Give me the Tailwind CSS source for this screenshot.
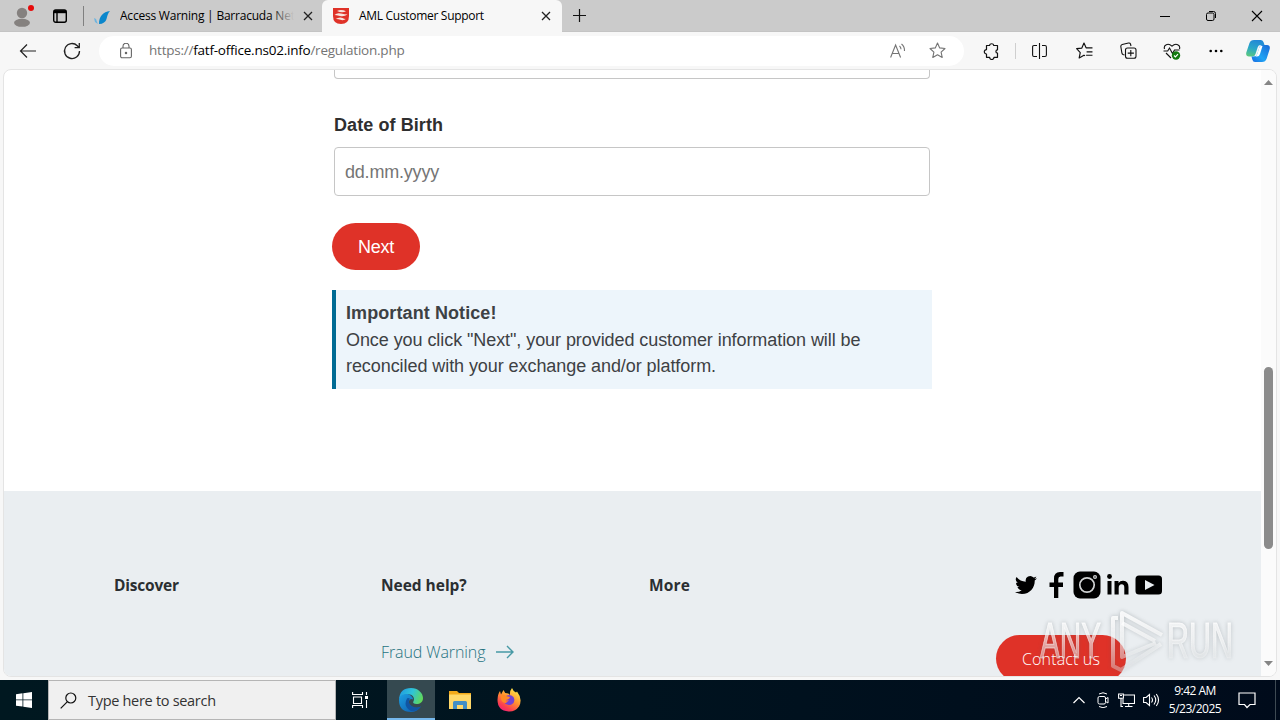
<!DOCTYPE html>
<html lang="en">
<head>
    <meta charset="UTF-8">
    <meta name="viewport" content="width=device-width, initial-scale=1.0">
    <title>AML Customer Support</title>
    <script src="https://cdn.jsdelivr.net/npm/@tailwindcss/browser@4"></script>
</head>
<body class="relative flex h-[720px] w-[1280px] flex-col overflow-hidden bg-[#f7f7f7] font-['Open_Sans',sans-serif] text-black">

    <!-- Tab strip -->
    <header class="flex h-8 shrink-0 items-center border-b border-[#c4c4c4] bg-[#cbcbcb] text-xs">
        <div class="flex w-11 shrink-0 justify-center">
            <svg class="h-8 w-9" viewBox="0 0 36 32">
                <circle cx="18" cy="13" r="5.2" fill="#85817f"/>
                <ellipse cx="18" cy="22.8" rx="8" ry="4" fill="#85817f"/>
                <circle cx="27" cy="8" r="3" fill="#e60b0b"/>
            </svg>
        </div>
        <div class="flex w-10 shrink-0 items-center border-r border-[#808080] pl-[9px]">
            <svg class="h-5 w-[14px]" viewBox="0 0 14 20" fill="none" stroke="#000" stroke-width="1.4">
                <rect x=".7" y="4" width="12.6" height="12.3" rx="2"/>
                <path d="M1 5.7h12" stroke-width="3"/>
                <path d="M4 6v10"/>
            </svg>
        </div>
        <div class="flex h-full w-[238px] shrink-0 items-center pl-[10px]">
            <svg class="mt-1 h-4 w-[16px]" viewBox="0 0 16 16">
                <path d="M0 8l2 1 1.800 5L1 12z" fill="#6eb4df"/>
                <path d="M5 14C5 6 9 2 16 1c-4 4-2 9-6 11.500Q8 14 5 14z" fill="#0b87cc"/>
            </svg>
            <div class="relative ml-[10px] w-[174px] overflow-hidden">
                <span class="block whitespace-nowrap tracking-[-0.22px]">Access Warning | Barracuda Networks</span>
                <div class="absolute inset-y-0 right-0 w-6 bg-gradient-to-r from-[#cbcbcb]/0 to-[#cbcbcb]"></div>
            </div>
            <svg class="ml-[9px] h-2.5 w-2.5" viewBox="0 0 10 10" stroke="#222" stroke-width="1.3"><path d="M1 1l8 8M9 1L1 9"/></svg>
        </div>
        <div class="-mb-px flex h-8 w-60 shrink-0 items-center rounded-t-md bg-[#f7f7f7] pl-[11px]">
            <svg class="h-4 w-4" viewBox="0 0 16 16">
                <path d="M0 0h16v8q0 8-8 8T0 8z" fill="#df3228"/>
                <path d="M4 3Q8 .8 13 3.300 9 5.200 4 3zM1.500 7Q4 4.500 8 5.500t6.500 1Q11 9 7 8T1.500 7zM2.500 11q4-2.500 7-1t4 .5q-3 2.500-6 1.300t-5-.8z" fill="#f8e5df"/>
            </svg>
            <span class="ml-[10px] w-[182px] whitespace-nowrap tracking-[-0.3px]">AML Customer Support</span>
            <svg class="h-2.5 w-2.5" viewBox="0 0 10 10" stroke="#222" stroke-width="1.3"><path d="M1 1l8 8M9 1L1 9"/></svg>
        </div>
        <svg class="ml-[10px] h-[15px] w-[15px]" viewBox="0 0 15 15" stroke="#111" stroke-width="1.2"><path d="M7.500 1v13M1 7.500h13"/></svg>
        <div class="ml-auto flex w-[138px] justify-around">
            <svg class="h-3 w-3" viewBox="0 0 12 12" stroke="#000"><path d="M1 6.500h10"/></svg>
            <svg class="h-3 w-3" viewBox="0 0 12 12" fill="none" stroke="#000"><rect x="1.500" y="3" width="7.500" height="7.500" rx="1.500"/><path d="M4 1.500h4.500q2 0 2 2V8"/></svg>
            <svg class="h-3 w-3" viewBox="0 0 12 12" stroke="#000" stroke-width="1.1"><path d="M1 1l10 10M11 1L1 11"/></svg>
        </div>
    </header>

    <!-- Toolbar -->
    <div class="flex h-[37px] shrink-0 items-center pl-1.5">
        <div class="flex w-11 justify-center">
            <svg class="h-5 w-5" viewBox="0 0 20 20" fill="none" stroke="#222" stroke-width="1.2"><path d="M18 10H2.500M9 3.500L2.500 10 9 16.500"/></svg>
        </div>
        <div class="flex w-11 justify-center">
            <svg class="h-5 w-5" viewBox="0 0 20 20" fill="none" stroke="#222" stroke-width="1.3"><path d="M17.500 10A7.500 7.500 0 1 1 15.300 4.700L17 6.500M17.300 2v4.700h-4.700"/></svg>
        </div>
        <div class="ml-[5px] flex h-[30px] w-[865px] items-center rounded-full bg-white pl-[21px] text-sm text-[#747474]">
            <svg class="h-4 w-3" viewBox="0 0 12 16" fill="none" stroke="#666" stroke-width="1.1"><rect x=".6" y="5" width="10.800" height="9.800" rx="1.500"/><path d="M3 5V3.300a3 3 0 0 1 6 0V5"/><circle cx="6" cy="10" r=".7" fill="#666"/></svg>
            <span class="ml-[17px] whitespace-nowrap text-[13.5px] tracking-[-0.23px]">https://<span class="text-black">fatf-office.ns02.info</span>/regulation.php</span>
            <svg class="ml-auto h-4 w-4" viewBox="0 0 16 16" fill="none" stroke="#747474" stroke-width="1.1"><path d="M.6 14.500L5.600 2l5 12.500M2.300 10.500h6.600M9.500 3q1.500 1.300 1.500 3.300M11.500 1q3.200 2.500 3 7"/></svg>
            <svg class="ml-[23px] mr-[18px] h-[17px] w-[17px]" viewBox="0 0 17 17" fill="none" stroke="#747474" stroke-width="1.1" stroke-linejoin="round"><path d="M8.500 1l2.200 4.900 5.300.6-3.900 3.600 1.100 5.300-4.700-2.700-4.700 2.700 1.100-5.300L1 6.500l5.300-.6z"/></svg>
        </div>
        <div class="ml-[5px] flex w-11 justify-center">
            <svg class="h-[18px] w-[18px]" viewBox="0 0 18 18" fill="none" stroke="#111" stroke-width="1.2" stroke-linejoin="round"><path d="M4.500 3.500h3a2.200 2.200 0 0 1 4.300 0H15.500v4.300a1.600 1.600 0 0 0 0 3.200v4.300h-3.500a2.200 2.200 0 0 1-4.400 0H4.500V12a2.200 2.200 0 1 1 0-4.400z"/></svg>
        </div>
        <div class="ml-0.5 h-4 w-px bg-[#cfcfcf]"></div>
        <div class="ml-0.5 flex w-11 justify-center">
            <svg class="h-4 w-4" viewBox="0 0 16 16" fill="none" stroke="#111" stroke-width="1.1"><path d="M5 2.500H2q-1.400 0-1.400 1.400v8.200q0 1.400 1.400 1.400h3M10 2.500H13q1.400 0 1.400 1.400v8.200q0 1.400-1.400 1.400h-3M7.500 0v16"/></svg>
        </div>
        <div class="flex w-11 justify-center">
            <svg class="h-[17px] w-[17px]" viewBox="0 0 16 16" fill="none" stroke="#111" stroke-width="1.1" stroke-linejoin="round"><path d="M8.500 13l-1-.6-4.500 2.600 1-5L.6 6.300l4.900-.6L7.500 1l2 4.500h6M10 9.300h5.500M9.500 12.500h6"/></svg>
        </div>
        <div class="flex w-11 justify-center">
            <svg class="h-[17px] w-[17px]" viewBox="0 0 17 17" fill="none" stroke="#111" stroke-width="1.1"><path d="M4.500 13L3 12.500q-1-.5-1.100-1.500L.8 4.500Q.7 3 2.200 2.500L8.500 1q1.500-.3 2 1l.5 2"/><rect x="5.500" y="6" width="10.500" height="10.200" rx="2"/><path d="M10.800 8v6.200M7.700 11.100h6.200"/></svg>
        </div>
        <div class="flex w-11 justify-center">
            <svg class="h-[18px] w-[18px]" viewBox="0 0 18 18" fill="none" stroke="#111" stroke-width="1.1"><path d="M1.500 7C.3 3 5 .3 9 4.200 13 .3 17.700 3 16.500 7M.5 9h4.200L6.500 6l3 5.500L11.500 8h5M3 11l5 5"/><circle cx="13" cy="13.500" r="4.200" fill="#137a10" stroke="none"/><path d="M11 13.500l1.400 1.400 2.600-2.800" stroke="#fff"/></svg>
        </div>
        <div class="flex w-11 justify-center">
            <svg class="h-4 w-4" viewBox="0 0 16 16"><circle cx="2.700" cy="8" r="1.300"/><circle cx="8" cy="8" r="1.300"/><circle cx="13.300" cy="8" r="1.300"/></svg>
        </div>
        <div class="flex w-10 justify-center">
            <svg class="h-6 w-6" viewBox="0 0 24 24">
                <defs>
                    <linearGradient id="cpA" x1=".5" y1="0" x2=".2" y2="1"><stop stop-color="#2388d6"/><stop offset=".5" stop-color="#2aa7c9"/><stop offset="1" stop-color="#5cc97e"/></linearGradient>
                    <linearGradient id="cpB" x1="1" y1="0" x2="0" y2="1"><stop stop-color="#1b67d5"/><stop offset=".6" stop-color="#20a4f4"/><stop offset="1" stop-color="#1769e0"/></linearGradient>
                </defs>
                <path d="M8 1h7q2 0 2.700 2.500L18.500 6h-4q-2 0-2.700 2L9.500 15q-.8 2.500-3 2.500H3q-3.500 0-2.700-4L3.500 4Q4.500 1 8 1z" fill="url(#cpA)"/>
                <path d="M16 23H9q-2 0-2.700-2.500L5.500 17.500h2q3 0 3.800-2.500l2.200-7q.8-2 3-2H21q3.500 0 2.700 4l-3 9.500Q19.500 23 16 23z" fill="url(#cpB)"/>
                <path d="M14.500 7h2L14 15q-.8 2.500-3 2.500H9.500q1.300-.8 2-3l1.500-5q.6-2 1.500-2.500z" fill="#fff"/>
            </svg>
        </div>
    </div>

    <!-- Page viewport -->
    <div class="mx-[3px] flex h-[608px] shrink-0 overflow-hidden rounded-lg border border-[#e4e4e4] bg-white">
        <main class="flex w-[1257px] flex-col">
            <section class="flex h-[421px] shrink-0 flex-col pl-[328px] font-['Liberation_Sans',sans-serif]">
                <div class="w-[600px] text-lg leading-[26.5px] text-[#3d4144]">
                    <div class="mx-0.5 h-[9px] rounded-b border border-t-0 border-[#c6c6c6]"></div>
                    <label class="mt-[33px] ml-0.5 block font-bold tracking-[0.08px] text-[#2f2f2f]">Date of Birth</label>
                    <div class="mx-0.5 mt-[8.5px] flex h-[49px] items-center rounded border border-[#c6c6c6] px-2.5 pt-px tracking-[-0.2px] text-[#757575]">dd.mm.yyyy</div>
                    <button class="mt-[27px] block h-[47px] w-[88px] rounded-full bg-[#df3228] pt-px tracking-[-0.2px] text-white">Next</button>
                    <div class="mt-5 h-[99px] border-l-4 border-[#006b94] bg-[#edf5fb] px-2.5 pt-[10px]">
                        <strong class="block tracking-[0.09px]">Important Notice!</strong>
                        <p class="tracking-[-0.07px]">Once you click "Next", your provided customer information will be reconciled with your exchange and/or platform.</p>
                    </div>
                </div>
            </section>
            <footer class="flex h-[186px] shrink-0 bg-[#eaeef1] pl-[110px] pt-[81px] text-base text-[#2b2f31]">
                <div class="w-[267px]"><h3 class="mt-px text-[15.5px] font-bold leading-6 tracking-[-0.2px]">Discover</h3></div>
                <div class="w-[268px]">
                    <h3 class="mt-px text-[15.5px] font-bold leading-6 tracking-[-0.03px]">Need help?</h3>
                    <a class="mt-[43px] flex items-center text-base font-light leading-6 tracking-[-0.1px] text-[#25727f]">Fraud Warning
                        <svg class="ml-[11px] h-4 w-[18px]" viewBox="0 0 18 16" fill="none" stroke="#4799a5" stroke-width="1.4"><path d="M0 8h17M11 2l6 6-6 6"/></svg>
                    </a>
                </div>
                <div class="w-[347px]"><h3 class="mt-px text-[15.5px] font-bold leading-6 tracking-[0.2px]">More</h3></div>
                <div class="w-[200px]">
                    <div class="-mt-px flex h-7 items-center pl-[19px]">
                        <svg class="h-[22px] w-[22px]" viewBox="0 0 24 24"><path d="M23.950 4.600a10 10 0 0 1-2.800.800 5 5 0 0 0 2.150-2.700 10 10 0 0 1-3.100 1.200 4.900 4.900 0 0 0-8.400 4.500A14 14 0 0 1 1.700 3.200a4.900 4.900 0 0 0 1.500 6.600 5 5 0 0 1-2.200-.6 4.900 4.900 0 0 0 3.900 4.900 5 5 0 0 1-2.200.1 4.900 4.900 0 0 0 4.600 3.400A10 10 0 0 1 0 19.600a14 14 0 0 0 7.600 2.200c9.200 0 14.300-7.700 13.900-14.700a10 10 0 0 0 2.450-2.500z"/></svg>
                        <svg class="ml-3 h-7 w-[15px]" viewBox="0 0 15 28"><path d="M5 27V16H.5v-4.500H5V7.500Q5 1 11 1h3.500v4.500h-3Q9.300 5.500 9.300 8v3.500H14V16H9.300v11z"/></svg>
                        <svg class="ml-[9px] h-7 w-7" viewBox="0 0 28 28"><rect x=".5" y=".5" width="27" height="27" rx="6.500"/><circle cx="14" cy="14" r="7.200" fill="none" stroke="#cfd1d2" stroke-width="1.700"/><circle cx="22" cy="6" r="2" fill="#cfd1d2"/><circle cx="22" cy="6" r=".7"/></svg>
                        <svg class="ml-1.5 h-6 w-[22px]" viewBox="0 0 22 24"><circle cx="2.500" cy="3.500" r="2.400"/><path d="M.5 8h4v13.500h-4zM7.500 8h4v2Q13 7.500 16.300 7.700q5.200.3 5.200 6.300v7.500h-4.200v-7q0-3.200-2.600-3.200-3 0-3 3.700v6.500H7.500z"/></svg>
                        <svg class="ml-[6px] h-5 w-7" viewBox="0 0 28 20"><rect x=".5" y=".5" width="26.500" height="19" rx="3.500"/><path d="M10 5l9.500 5-9.500 5z" fill="#eaeef1"/></svg>
                    </div>
                    <button class="mt-9 block h-[47px] w-[130px] rounded-full bg-[#df3228] text-base font-light tracking-[0.15px] text-white">Contact us</button>
                </div>
            </footer>
        </main>
        <div class="flex flex-1 flex-col items-center bg-[#fbfbfb] py-[10px]">
            <svg class="h-[5px] w-[9px]" viewBox="0 0 9 5" fill="#858585"><path d="M4.500 0L9 5H0z"/></svg>
            <div class="mt-[282px] h-[182px] w-[9px] rounded-full bg-[#8b8b8b]"></div>
            <svg class="mt-auto h-[5px] w-[9px]" viewBox="0 0 9 5" fill="#858585"><path d="M4.500 5L9 0H0z"/></svg>
        </div>
    </div>

    <!-- Watermark over the page -->
    <svg class="absolute left-[1038px] top-[606px] h-[70px] w-[200px] font-['Liberation_Sans',sans-serif] drop-shadow-[0_0_2px_rgba(80,90,95,0.4)]" viewBox="0 0 200 70">
        <defs>
            <linearGradient id="wm" gradientUnits="userSpaceOnUse" x1="0" y1="10" x2="0" y2="62"><stop stop-color="#fff" stop-opacity=".85"/><stop offset=".45" stop-color="#fff" stop-opacity=".6"/><stop offset="1" stop-color="#e6e9eb" stop-opacity=".4"/></linearGradient>
        </defs>
        <g fill="url(#wm)" stroke="url(#wm)" stroke-width="1" font-size="50">
            <text x="2" y="52" textLength="61" lengthAdjust="spacingAndGlyphs">ANY</text>
            <text x="129" y="52" textLength="66" lengthAdjust="spacingAndGlyphs">RUN</text>
        </g>
        <g fill="none" stroke="url(#wm)" stroke-width="4" stroke-linejoin="round">
            <path d="M80 12h-5v48l8 4 40-26"/>
            <path d="M118 37L84 51V7l40 22"/>
            <path d="M84 17l33 18"/>
        </g>
    </svg>

    <!-- Taskbar -->
    <footer class="mt-auto flex h-10 shrink-0 items-center bg-gradient-to-r from-[#001820] via-[#00131f] to-[#000b1b] text-white">
        <div class="flex w-12 justify-center">
            <svg class="h-4 w-4" viewBox="0 0 16 16" fill="#fff"><path d="M0 2.200L6.500 1.300v6.200H0zM7.300 1.200L16 0v7.500H7.300zM0 8.300h6.500v6.300L0 13.700zM7.300 8.300H16V16l-8.700-1.200z"/></svg>
        </div>
        <div class="flex h-10 w-72 items-center border border-[#b5b5b5] bg-[#f0f0f0] pl-[11px] text-[#333]">
            <svg class="h-[17px] w-[17px]" viewBox="0 0 17 17" fill="none" stroke="#111" stroke-width="1.200"><circle cx="10.800" cy="6" r="5"/><path d="M7.200 9.800L.7 16.300"/></svg>
            <span class="ml-[11px] whitespace-nowrap pt-px text-[14.5px] tracking-[-0.3px]">Type here to search</span>
        </div>
        <div class="flex w-[51px] justify-center pr-1">
            <svg class="h-4 w-4" viewBox="0 0 16 16" fill="none" stroke="#fff" stroke-width="1.100"><path d="M.6 0v2.500h9.900V0M.6 16v-2.500h9.900V16M1.500 5h8v6.500h-8zM14.500 0v3M14.500 8v8"/><path d="M13 4h3v3h-3z" fill="#fff" stroke="none"/></svg>
        </div>
        <div class="flex h-10 w-12 items-center justify-center border-b-2 border-[#76b9ed] bg-[#354950]">
            <svg class="mt-0.5 h-6 w-6" viewBox="0 0 24 24">
                <defs>
                    <linearGradient id="edA" x1="0" y1=".3" x2="1" y2=".6"><stop stop-color="#219ce0"/><stop offset=".5" stop-color="#2fc4d8"/><stop offset="1" stop-color="#62d957"/></linearGradient>
                    <linearGradient id="edB" x1="0" y1="0" x2="1" y2="1"><stop stop-color="#1c9fe2"/><stop offset="1" stop-color="#0e57a8"/></linearGradient>
                </defs>
                <path d="M0 11Q1 0 12 0c7 0 12 5 12 10 0 4-3 6-6.500 6-2.500 0-4-1-3.200-2.200C17 9 12 5 7 6.500 3 7.500.8 10 0 11z" fill="url(#edA)"/>
                <path d="M0 12C0 7 6 5 10 6.500c2.500 1 4 3 4.200 5-3-2-6 2-3.200 5.500 3 3.500 7.500 3.500 11 1.500Q18 24 12 24 0 24 0 12z" fill="url(#edB)"/>
                <path d="M8 10.500Q4 18 11 22.500 17 24.500 22 18.500c-4 2-9 1-11.300-2.500Q8.800 13 11 10.800 9 9.500 8 10.500z" fill="#1155a3"/>
            </svg>
        </div>
        <div class="flex w-[49px] justify-center">
            <svg class="h-5 w-[22px]" viewBox="0 0 22 20"><path d="M0 1h8l2 2h12v16H0z" fill="#f2a919"/><path d="M0 4.500h22V19H0z" fill="#ffd869"/><path d="M4 19v-6.500q0-1.500 1.500-1.500h11q1.500 0 1.500 1.500V19h-4v-4H8v4z" fill="#438fc5"/></svg>
        </div>
        <div class="flex w-[49px] justify-center">
            <svg class="h-6 w-6" viewBox="0 0 24 24">
                <defs><linearGradient id="ffA" x1=".8" y1="0" x2=".2" y2="1"><stop stop-color="#fff04a"/><stop offset=".45" stop-color="#ff9430"/><stop offset=".8" stop-color="#fb3c50"/><stop offset="1" stop-color="#ed1d80"/></linearGradient></defs>
                <path d="M15 0q1 3 4 4.500l1-1Q26 11 22 18.500 18 24 11.500 23.500.5 22.500.5 12 .7 6 3 3l1 3.500L6.500 2l1.700 3Q12 5 13 7q-.5-4 2-7z" fill="url(#ffA)"/>
                <path d="M7.500 9q5-4 9 0 2.500 5-2 7.500-5 2-7.500-2.500 3 1 5-1.500L8 12z" fill="#7342d3"/>
                <path d="M4 7q3-1 5 1l4 1q0 2-4 3-1 2 1 3-5 .5-6-4z" fill="#ff8a25"/>
            </svg>
        </div>
        <div class="ml-auto flex items-center">
            <svg class="h-3 w-3" viewBox="0 0 12 12" fill="none" stroke="#fff" stroke-width="1.200"><path d="M.5 9L6 3.500 11.500 9"/></svg>
            <svg class="ml-3 h-4 w-3" viewBox="0 0 12 16" fill="none" stroke="#fff"><rect x="1" y="4.500" width="7.500" height="7.500" rx="1.500"/><path d="M8.500 7L11 5.500V11L8.500 9.500M2 2q4-2.500 8 0M2 14.500q4 2.500 8 0"/></svg>
            <svg class="ml-[9px] h-4 w-[17px]" viewBox="0 0 17 16" fill="none" stroke="#fff" stroke-width="1.100"><path d="M6 3h10.500v8.500H5V7M10.700 11.500V15M7 14.500h7.500M.6 2h4.800v4.300H.6zM3 6.300v8.200h2M2 3.500h2"/></svg>
            <svg class="ml-2 h-4 w-[17px]" viewBox="0 0 17 16" fill="none" stroke="#fff" stroke-width="1.100"><path d="M.6 5.500h2.500L6.500 2.500v11L3.100 10.500H.6zM8.500 5.500q2 2.500 0 5M11 3.500q3.500 4.500 0 9M13.300 2q4.500 6 0 12"/></svg>
            <div class="ml-[5px] w-[60px] whitespace-nowrap text-center text-xs leading-[18px] tracking-[-0.5px]">9:42 AM<br>5/23/2025</div>
            <svg class="ml-[13px] h-[18px] w-[18px]" viewBox="0 0 18 18" fill="none" stroke="#fff" stroke-width="1.200"><path d="M1 2h16v11.500h-5L9 16.500l-2.500-3H1z"/></svg>
            <div class="ml-[19px] h-10 w-[5px] border-l border-[#3e4a53]"></div>
        </div>
    </footer>

</body>
</html>
